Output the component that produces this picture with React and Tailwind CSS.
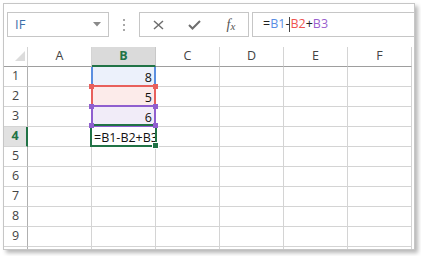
import React from 'react';

const COLS = ['A', 'B', 'C', 'D', 'E', 'F'];
const ROWS = [1, 2, 3, 4, 5, 6, 7, 8, 9, 10];

const values = {
  B1: { text: '8', bg: 'bg-[#ecf1fb]' },
  B2: { text: '5', bg: 'bg-[#fcebea]' },
  B3: { text: '6', bg: 'bg-[#f1ecf8]' },
};

function Toolbar() {
  return (
    <div className="flex items-stretch pl-[3px] pt-[8px] h-[33px]">
      <div className="w-[102px] h-[25px] border border-[#c6c6c6] flex items-center justify-between pl-[7px] pr-[7px]">
        <span className="text-[13px] text-[#3a6ea8]">IF</span>
        <svg width="8" height="5" viewBox="0 0 8 5">
          <polygon points="0,0 8,0 4,4.5" fill="#8a8a8a" />
        </svg>
      </div>
      <div className="w-[30px] flex flex-col items-center pt-[7px] gap-[3px]">
        <span className="block w-[2px] h-[2px] bg-[#a8a8a8]" />
        <span className="block w-[2px] h-[2px] bg-[#a8a8a8]" />
        <span className="block w-[2px] h-[2px] bg-[#a8a8a8]" />
      </div>
      <div className="w-[110px] h-[25px] border border-[#c6c6c6] flex">
        <div className="w-[36px] flex items-center justify-center">
          <svg width="11" height="10" viewBox="0 0 11 10">
            <path d="M1 1 L10 9 M10 1 L1 9" stroke="#6e6e6e" strokeWidth="1.5" />
          </svg>
        </div>
        <div className="w-[36px] flex items-center justify-center">
          <svg width="13" height="10" viewBox="0 0 13 10">
            <path d="M1 5 L4.5 8.5 L12 1" stroke="#6e6e6e" strokeWidth="2" fill="none" />
          </svg>
        </div>
        <div className="flex-1 flex items-center justify-center pl-[2px] font-['Liberation_Serif',serif] italic text-[#555]">
          <span className="text-[14px] leading-none">f</span>
          <span className="text-[11px] leading-none mt-[3px]">x</span>
        </div>
      </div>
      <div className="flex-1 ml-[3px] h-[25px] border-y border-l border-[#c6c6c6] flex items-center pl-[10px] text-[12.5px] text-[#222]">
        <span>=</span>
        <span className="text-[#5a8ee4]">B1</span>
        <span>-</span>
        <span className="inline-block w-px h-[15px] bg-[#444]" />
        <span className="text-[#ef5450]">B2</span>
        <span>+</span>
        <span className="text-[#9a5fcf]">B3</span>
      </div>
    </div>
  );
}

function Grid() {
  return (
    <div className="relative mt-[10px]">
      <div className="grid grid-cols-[24px_repeat(6,64px)] auto-rows-[20px] text-[12.5px] text-[#444]">
        <div className="border-r border-r-[#d4d4d4] border-b border-b-[#9e9e9e] flex items-end justify-end pr-[2px] pb-[5px]">
          <svg width="10" height="10" viewBox="0 0 10 10">
            <polygon points="10,0 10,10 0,10" fill="#dcdcdc" />
          </svg>
        </div>
        {COLS.map((c) =>
          c === 'B' ? (
            <div key={c} className="bg-[#dadada] border-r border-r-[#c8c8c8] border-b-2 border-b-[#217346] flex items-center justify-center font-bold text-[#217346]">
              {c}
            </div>
          ) : (
            <div key={c} className="border-r border-r-[#d4d4d4] border-b border-b-[#9e9e9e] flex items-center justify-center">
              {c}
            </div>
          )
        )}
        {ROWS.map((r) => (
          <React.Fragment key={r}>
            {r === 4 ? (
              <div className="bg-[#e1e1e1] border-r-2 border-r-[#217346] border-b border-b-[#d4d4d4] flex items-center justify-center font-bold text-[#217346]">
                {r}
              </div>
            ) : (
              <div className="border-r border-r-[#b0b0b0] border-b border-b-[#d4d4d4] flex items-center justify-center">
                {r < 10 ? r : ''}
              </div>
            )}
            {COLS.map((c) => {
              const v = values[c + r];
              if (c === 'B' && r === 4) {
                return (
                  <div key={c} className="border-r border-b border-[#d4d4d4] overflow-hidden whitespace-nowrap flex items-end pl-[2px] leading-[16px] text-[#111]">
                    =B1-B2+B3
                  </div>
                );
              }
              return (
                <div
                  key={c}
                  className={`border-r border-b border-[#d4d4d4] flex items-end justify-end pr-[3px] leading-[16px] text-[#111] ${v ? v.bg : ''}`}
                >
                  {v ? v.text : ''}
                </div>
              );
            })}
          </React.Fragment>
        ))}
      </div>

      {/* reference ranges */}
      <div className="absolute left-[87px] top-[20px] w-[65px] h-[20px] border-x-2 border-[#5b8fe0]" />
      <div className="absolute left-[87px] top-[38px] w-[65px] h-[22px] border-2 border-[#e8605c]" />
      <div className="absolute left-[85px] top-[37px] w-[5px] h-[5px] bg-[#e8605c]" />
      <div className="absolute left-[149px] top-[37px] w-[5px] h-[5px] bg-[#e8605c]" />
      <div className="absolute left-[87px] top-[58px] w-[65px] h-[22px] border-2 border-[#8f5fcf]" />
      <div className="absolute left-[85px] top-[57px] w-[5px] h-[5px] bg-[#8f5fcf]" />
      <div className="absolute left-[149px] top-[57px] w-[5px] h-[5px] bg-[#8f5fcf]" />

      {/* active cell */}
      <div className="absolute left-[86px] top-[77px] w-[67px] h-[23px] border-2 border-[#217346]" />
      <div className="absolute left-[85px] top-[76px] w-[5px] h-[5px] bg-[#8f5fcf]" />
      <div className="absolute left-[149px] top-[76px] w-[5px] h-[5px] bg-[#8f5fcf]" />
      <div className="absolute left-[148px] top-[95px] w-[7px] h-[7px] bg-[#217346] border border-white" />
    </div>
  );
}

export default function App() {
  return (
    <div className="w-[421px] h-[256px] bg-white pt-[3px] pl-[3px] font-['Open_Sans',sans-serif]">
      <div className="w-[412px] h-[247px] border border-[#c6c6c6] bg-white overflow-hidden shadow-[3px_3px_4px_rgba(0,0,0,0.28)]">
        <Toolbar />
        <Grid />
      </div>
    </div>
  );
}
